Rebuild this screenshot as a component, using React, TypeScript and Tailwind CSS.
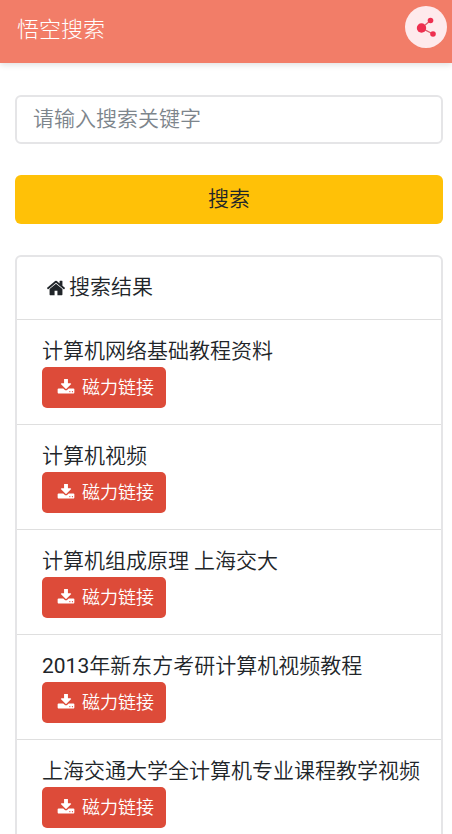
import React, { useState } from "react";

interface Result {
  id: number;
  year?: string;
  title: string;
}

const results: Result[] = [
  { id: 1, title: "计算机网络基础教程资料" },
  { id: 2, title: "计算机视频" },
  { id: 3, title: "计算机组成原理 上海交大" },
  { id: 4, year: "2013", title: "年新东方考研计算机视频教程" },
  { id: 5, title: "上海交通大学全计算机专业课程教学视频" },
];

const HomeIcon: React.FC = () => (
  <svg
    className="w-5 h-5 shrink-0"
    viewBox="0 0 1792 1792"
    fill="currentColor"
    aria-hidden="true"
  >
    <path d="M1472 992v480q0 26-19 45t-45 19h-384v-384h-256v384h-384q-26 0-45-19t-19-45v-480q0-1 .5-3t.5-3l575-474 575 474q1 2 1 6zm223-69l-62 74q-8 9-21 11h-3q-13 0-21-7l-692-577-692 577q-12 8-24 7-13-2-21-11l-62-74q-8-10-7-23.5t11-21.5l719-599q32-26 76-26t76 26l244 204v-195q0-14 9-23t23-9h192q14 0 23 9t9 23v408l219 182q10 8 11 21.5t-7 23.5z" />
  </svg>
);

const DownloadIcon: React.FC = () => (
  <svg
    className="w-[18px] h-[18px] shrink-0"
    viewBox="0 90 1792 1792"
    fill="currentColor"
    aria-hidden="true"
  >
    <path d="M1344 1344q0-26-19-45t-45-19-45 19-19 45 19 45 45 19 45-19 19-45zm256 0q0-26-19-45t-45-19-45 19-19 45 19 45 45 19 45-19 19-45zm128-224v320q0 40-28 68t-68 28h-1472q-40 0-68-28t-28-68v-320q0-40 28-68t68-28h465l135 136q58 56 136 56t136-56l136-136h464q40 0 68 28t28 68zm-325-569q17 41-14 70l-448 448q-18 19-45 19t-45-19l-448-448q-31-29-14-70 17-39 59-39h256v-448q0-26 19-45t45-19h256q26 0 45 19t19 45v448h256q42 0 59 39z" />
  </svg>
);

const ShareIcon: React.FC = () => (
  <svg className="w-[42px] h-[42px]" viewBox="0 0 42 42" aria-hidden="true">
    <path
      d="M25.5 14.5L16.5 22L28 28"
      fill="none"
      stroke="#d9606c"
      strokeWidth="1.4"
    />
    <circle cx="16.5" cy="22" r="4.7" fill="#ee2f4f" />
    <circle cx="25.5" cy="14.5" r="2.8" fill="#ee2f4f" />
    <circle cx="28" cy="28" r="2.8" fill="#ee2f4f" />
  </svg>
);

const App: React.FC = () => {
  const [keyword, setKeyword] = useState<string>("");

  return (
    <div className="min-h-screen bg-white text-[21px] font-[350] text-[#212529] font-[Roboto,'Noto_Sans_CJK_SC',sans-serif]">
      <header className="flex items-start justify-between h-[63px] pt-1.5 pl-[17px] pr-[5px] bg-[#f27d68] shadow-[0_2px_6px_rgba(0,0,0,0.12)]">
        <h1 className="text-[22px] leading-[48px] font-light text-white">
          悟空搜索
        </h1>
        <button
          type="button"
          aria-label="分享"
          className="rounded-full bg-[#feeaec]"
        >
          <ShareIcon />
        </button>
      </header>

      <main className="pt-8 pl-[15px] pr-[9px]">
        <form onSubmit={(e) => e.preventDefault()}>
          <input
            type="text"
            aria-label="请输入搜索关键字"
            placeholder="请输入搜索关键字"
            value={keyword}
            onChange={(e) => setKeyword(e.target.value)}
            className="block w-full h-[49px] px-4 pb-0.5 border-2 border-[#e5e5e7] rounded-md placeholder:text-[#7d858c]"
          />
          <button
            type="submit"
            className="block w-full h-[49px] mt-[31px] bg-[#ffc107] rounded-md"
          >
            搜索
          </button>
        </form>

        <section className="mt-[31px] mb-8 border-2 border-[#e5e5e7] rounded-md">
          <h2 className="flex items-center gap-[3px] h-[62px] pl-[29px] font-[350]">
            <HomeIcon />
            搜索结果
          </h2>
          <ul>
            {results.map((result) => (
              <li
                key={result.id}
                className="pt-4 pb-4 pl-[25px] border-t border-[#dfdfdf]"
              >
                <p className="leading-[31px] whitespace-nowrap">
                  {result.year && (
                    <span className="font-normal">{result.year}</span>
                  )}
                  {result.title}
                </p>
                <a
                  href="#"
                  className="inline-flex items-center gap-[7px] h-[41px] pl-[15px] pr-3 align-top text-lg text-white bg-[#dd4b39] rounded-[5px]"
                >
                  <DownloadIcon />
                  磁力链接
                </a>
              </li>
            ))}
          </ul>
        </section>
      </main>
    </div>
  );
};

export default App;
